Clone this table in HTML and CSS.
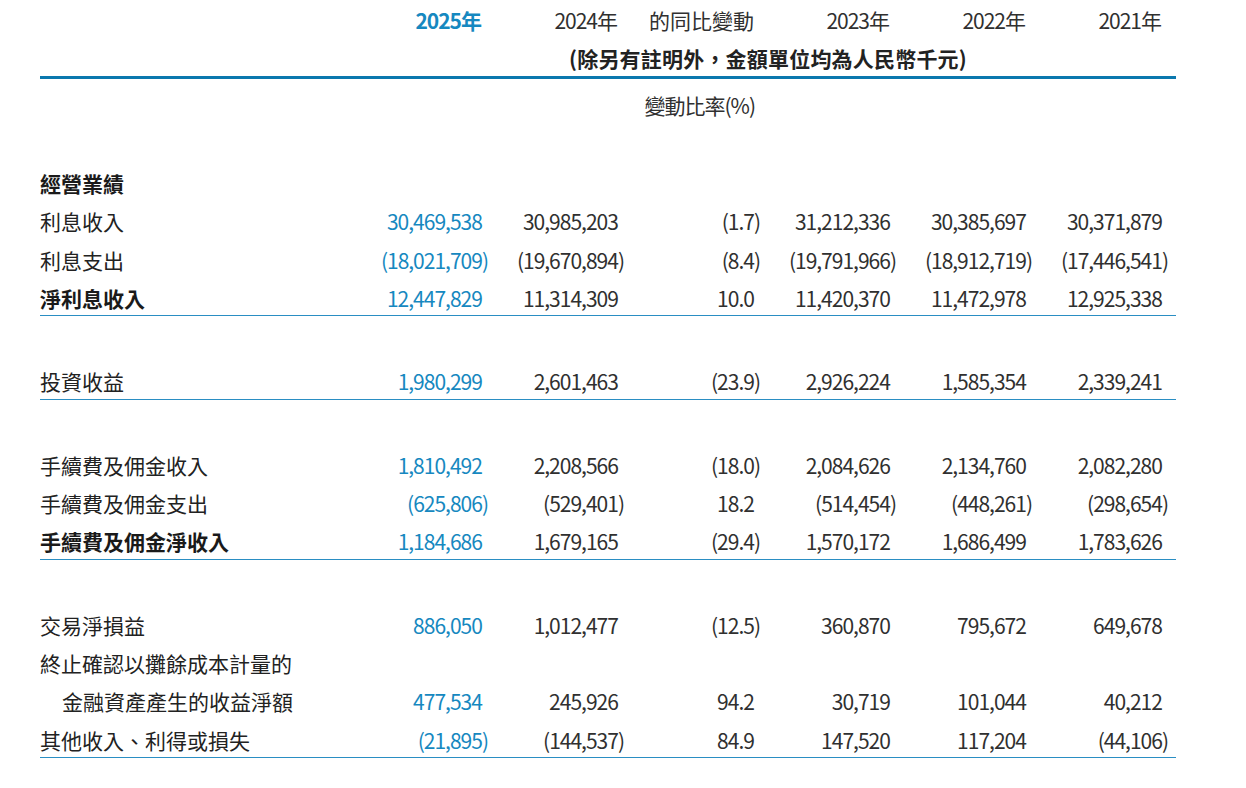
FILE: index.html
```html
<!DOCTYPE html>
<html lang="zh-Hant">
<head>
<meta charset="utf-8">
<title>財務摘要</title>
<link rel="stylesheet" href="styles.css">
</head>
<body>
<div class="sheet">
  <div class="hrow years">
    <div></div>
    <div class="h yr cur">2025年</div>
    <div class="h yr">2024年</div>
    <div class="h">的同比變動</div>
    <div class="h yr">2023年</div>
    <div class="h yr">2022年</div>
    <div class="h yr">2021年</div>
  </div>
  <div class="hrow unit">
    <div></div>
    <div class="unit-text">(除另有註明外，金額單位均為人民幣千元)</div>
  </div>
  <div class="hrow ratio">
    <div></div><div></div><div></div>
    <div class="h pct">變動比率(%)</div>
  </div>

  <div class="group first">
    <div class="row"><div class="lbl b">經營業績</div></div>
    <div class="row">
      <div class="lbl">利息收入</div>
      <div class="n cur">30,469,538<span class="rp">)</span></div>
      <div class="n">30,985,203<span class="rp">)</span></div>
      <div class="n">(1.7)</div>
      <div class="n">31,212,336<span class="rp">)</span></div>
      <div class="n">30,385,697<span class="rp">)</span></div>
      <div class="n">30,371,879<span class="rp">)</span></div>
    </div>
    <div class="row">
      <div class="lbl">利息支出</div>
      <div class="n cur">(18,021,709)</div>
      <div class="n">(19,670,894)</div>
      <div class="n">(8.4)</div>
      <div class="n">(19,791,966)</div>
      <div class="n">(18,912,719)</div>
      <div class="n">(17,446,541)</div>
    </div>
    <div class="row">
      <div class="lbl b">淨利息收入</div>
      <div class="n cur">12,447,829<span class="rp">)</span></div>
      <div class="n">11,314,309<span class="rp">)</span></div>
      <div class="n">10.0<span class="rp">)</span></div>
      <div class="n">11,420,370<span class="rp">)</span></div>
      <div class="n">11,472,978<span class="rp">)</span></div>
      <div class="n">12,925,338<span class="rp">)</span></div>
    </div>
  </div>

  <div class="group">
    <div class="row">
      <div class="lbl">投資收益</div>
      <div class="n cur">1,980,299<span class="rp">)</span></div>
      <div class="n">2,601,463<span class="rp">)</span></div>
      <div class="n">(23.9)</div>
      <div class="n">2,926,224<span class="rp">)</span></div>
      <div class="n">1,585,354<span class="rp">)</span></div>
      <div class="n">2,339,241<span class="rp">)</span></div>
    </div>
  </div>

  <div class="group">
    <div class="row">
      <div class="lbl">手續費及佣金收入</div>
      <div class="n cur">1,810,492<span class="rp">)</span></div>
      <div class="n">2,208,566<span class="rp">)</span></div>
      <div class="n">(18.0)</div>
      <div class="n">2,084,626<span class="rp">)</span></div>
      <div class="n">2,134,760<span class="rp">)</span></div>
      <div class="n">2,082,280<span class="rp">)</span></div>
    </div>
    <div class="row">
      <div class="lbl">手續費及佣金支出</div>
      <div class="n cur">(625,806)</div>
      <div class="n">(529,401)</div>
      <div class="n">18.2<span class="rp">)</span></div>
      <div class="n">(514,454)</div>
      <div class="n">(448,261)</div>
      <div class="n">(298,654)</div>
    </div>
    <div class="row">
      <div class="lbl b">手續費及佣金淨收入</div>
      <div class="n cur">1,184,686<span class="rp">)</span></div>
      <div class="n">1,679,165<span class="rp">)</span></div>
      <div class="n">(29.4)</div>
      <div class="n">1,570,172<span class="rp">)</span></div>
      <div class="n">1,686,499<span class="rp">)</span></div>
      <div class="n">1,783,626<span class="rp">)</span></div>
    </div>
  </div>

  <div class="group">
    <div class="row">
      <div class="lbl">交易淨損益</div>
      <div class="n cur">886,050<span class="rp">)</span></div>
      <div class="n">1,012,477<span class="rp">)</span></div>
      <div class="n">(12.5)</div>
      <div class="n">360,870<span class="rp">)</span></div>
      <div class="n">795,672<span class="rp">)</span></div>
      <div class="n">649,678<span class="rp">)</span></div>
    </div>
    <div class="row">
      <div class="lbl wide">終止確認以攤餘成本計量的</div>
    </div>
    <div class="row">
      <div class="lbl indent">金融資產產生的收益淨額</div>
      <div class="n cur">477,534<span class="rp">)</span></div>
      <div class="n">245,926<span class="rp">)</span></div>
      <div class="n">94.2<span class="rp">)</span></div>
      <div class="n">30,719<span class="rp">)</span></div>
      <div class="n">101,044<span class="rp">)</span></div>
      <div class="n">40,212<span class="rp">)</span></div>
    </div>
    <div class="row">
      <div class="lbl">其他收入、利得或損失</div>
      <div class="n cur">(21,895)</div>
      <div class="n">(144,537)</div>
      <div class="n">84.9<span class="rp">)</span></div>
      <div class="n">147,520<span class="rp">)</span></div>
      <div class="n">117,204<span class="rp">)</span></div>
      <div class="n">(44,106)</div>
    </div>
  </div>
</div>
</body>
</html>
```

FILE: styles.css
```css
html, body {
  margin: 0;
  padding: 0;
  background: #ffffff;
}
body {
  font-family: "Noto Sans CJK TC", "Noto Sans CJK SC", sans-serif;
  font-size: 21px;
  color: #303030;
}
.sheet {
  width: 1136px;
  margin-left: 40px;
}
.hrow, .row {
  display: grid;
  grid-template-columns: 320px repeat(6, 136px);
  align-items: center;
}
.years {
  height: 40px;
}
.h {
  text-align: right;
  padding-right: 14px;
  white-space: nowrap;
}
.h.yr {
  letter-spacing: -1px;
  padding-right: 15px;
}
.h.pct {
  letter-spacing: -1px;
  padding-right: 13px;
}
.h.cur {
  color: #1688c0;
  font-weight: 700;
}
.unit {
  height: 36px;
  border-bottom: 3px solid #0b78ae;
}
.unit-text {
  grid-column: 2 / span 6;
  text-align: center;
  font-weight: 700;
  color: #222222;
  letter-spacing: 0.2px;
}
.ratio {
  height: 52px;
}
.group {
  margin-top: 44px;
  border-bottom: 1px solid #2a8ec3;
}
.group.first {
  margin-top: 31px;
}
.row {
  height: 38.33px;
  box-sizing: border-box;
  padding-top: 4px;
}
.lbl {
  white-space: nowrap;
  color: #222222;
}
.lbl.b {
  font-weight: 700;
  color: #1a1a1a;
}
.lbl.wide {
  grid-column: 1 / span 3;
}
.lbl.indent {
  padding-left: 22px;
}
.n {
  text-align: right;
  padding-right: 8px;
  white-space: nowrap;
  letter-spacing: -1px;
}
.n.cur {
  color: #1688c0;
}
.rp {
  visibility: hidden;
}
```
